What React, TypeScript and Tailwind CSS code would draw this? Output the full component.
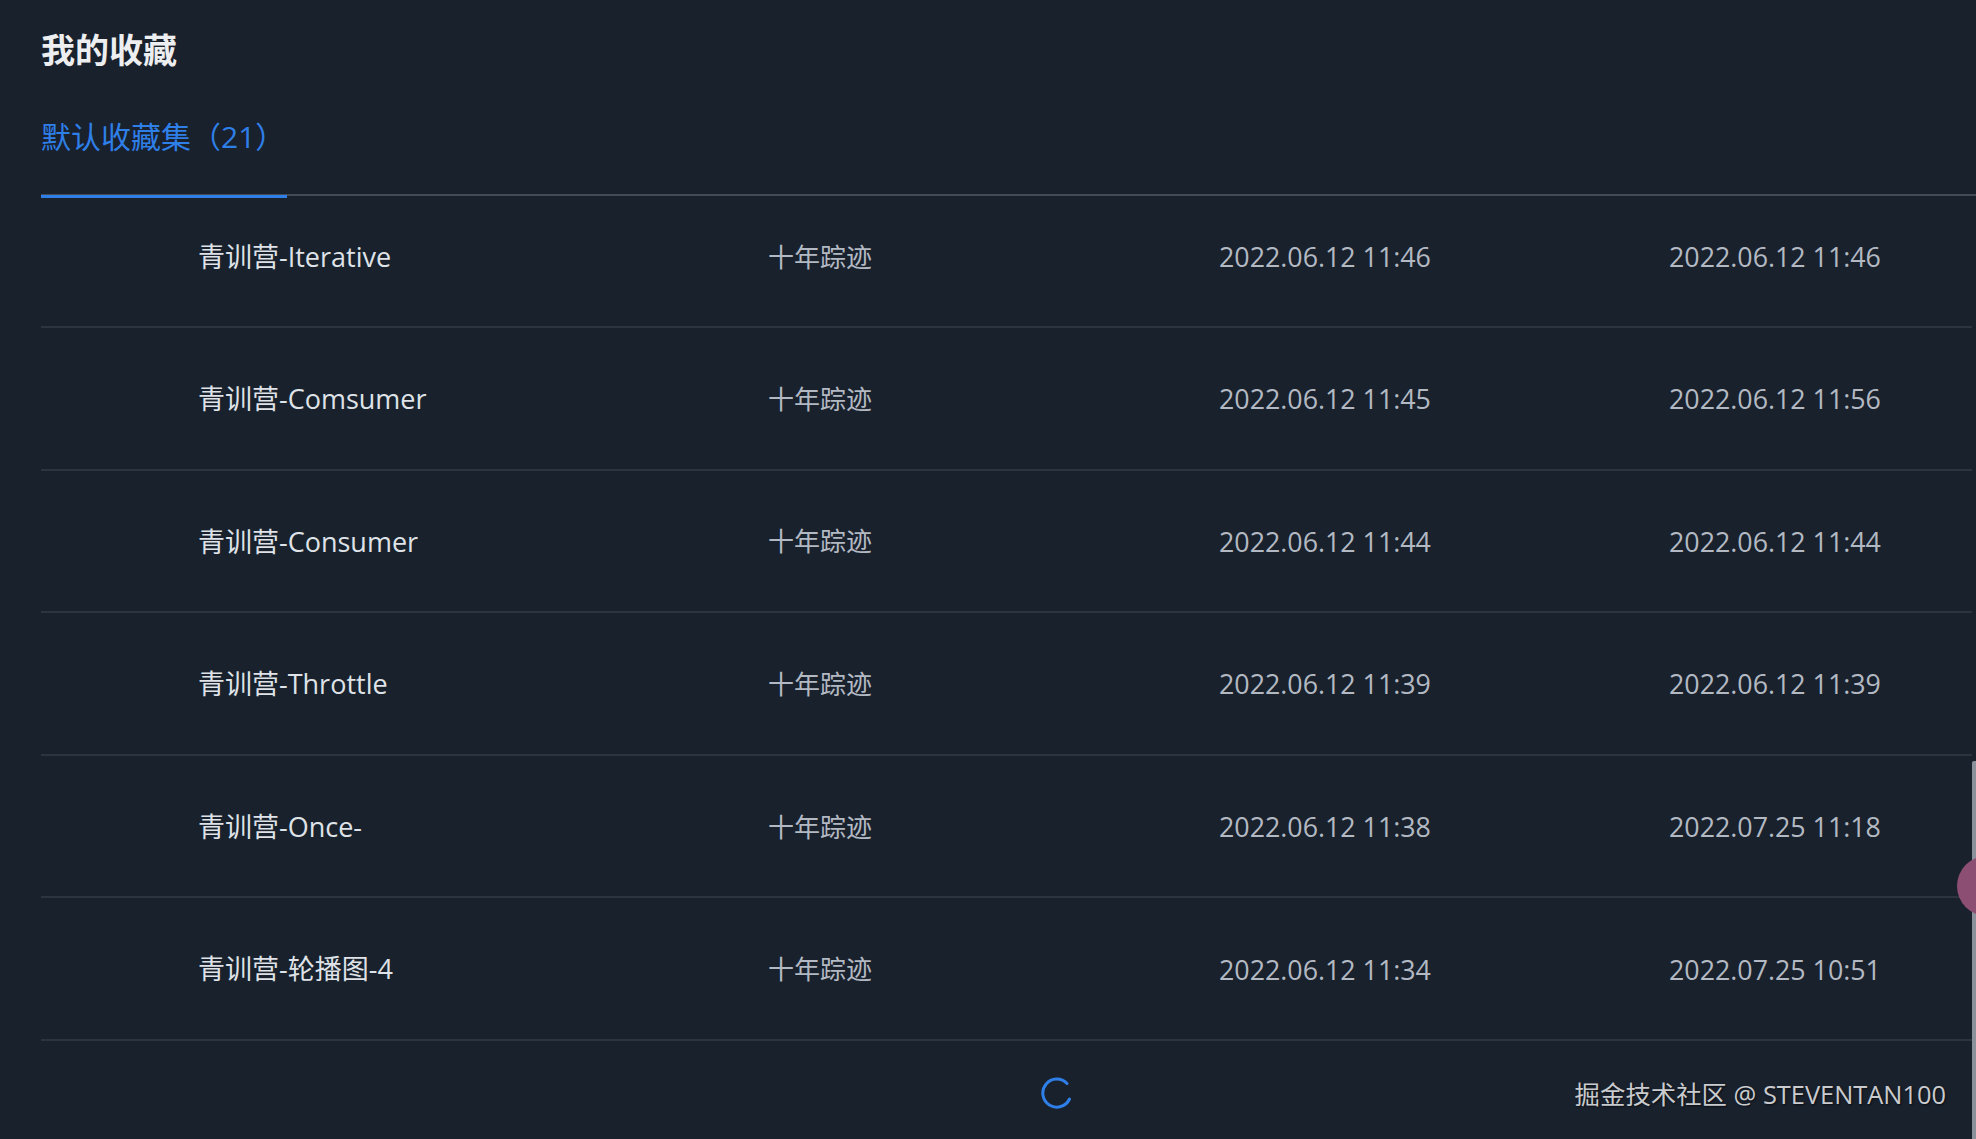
const ROWS = [
  { name: "青训营-Iterative", created: "2022.06.12 11:46", updated: "2022.06.12 11:46" },
  { name: "青训营-Comsumer", created: "2022.06.12 11:45", updated: "2022.06.12 11:56" },
  { name: "青训营-Consumer", created: "2022.06.12 11:44", updated: "2022.06.12 11:44" },
  { name: "青训营-Throttle", created: "2022.06.12 11:39", updated: "2022.06.12 11:39" },
  { name: "青训营-Once-", created: "2022.06.12 11:38", updated: "2022.07.25 11:18" },
  { name: "青训营-轮播图-4", created: "2022.06.12 11:34", updated: "2022.07.25 10:51" },
];

export default function App() {
  return (
    <div className="relative h-[1139px] overflow-hidden bg-[#19212d] font-['Open_Sans','Noto_Sans_CJK_SC',sans-serif]">
      <div className="pl-[41px]">
        <h1 className="pt-[26px] text-[34px] leading-[48px] font-bold text-[#eceef0]">我的收藏</h1>

        {/* Tabs */}
        <div className="mt-[41px] flex h-[81px] border-b-2 border-[#454b55]">
          <div className="-mb-[2px] h-[83px] w-[246px] border-b-[3px] border-[#2f7fe8] text-[30px] leading-[44px] text-[#2f7fe8]">
            默认收藏集（21）
          </div>
        </div>

        {/* List */}
        <div className="mr-[4px]">
          {ROWS.map((row, i) => (
            <div
              key={row.name}
              className={`grid grid-cols-[727px_451px_450px_1fr] items-center border-b-2 border-[#2c3440] ${
                i === 0 ? "h-[132px] pb-[7px]" : "h-[142.6px] pt-[2px]"
              }`}
            >
              <div className="pl-[157px] text-[27px] text-[#dfe3e8]">{row.name}</div>
              <div className="text-[26px] text-[#b3b9c2]">十年踪迹</div>
              <div className="text-[26.8px] text-[#b3b9c2]">{row.created}</div>
              <div className="text-[26.8px] text-[#b3b9c2]">{row.updated}</div>
            </div>
          ))}
        </div>
      </div>

      {/* Loading spinner */}
      <svg className="absolute left-[1041px] top-[1077px] h-[32px] w-[32px]" viewBox="0 0 32 32" fill="none">
        <path d="M26 6.5A14 14 0 1 0 28.5 22" stroke="#2f7fe8" strokeWidth="3" strokeLinecap="round" />
      </svg>

      {/* Scrollbar and floating button */}
      <div className="absolute left-[1972px] top-[761px] h-[378px] w-[4px] rounded-tl-[2px] bg-[#8b919a]" />
      <div className="absolute left-[1957px] top-[856px] h-[60px] w-[60px] rounded-full bg-[#8c4f73]" />

      {/* Watermark */}
      <div className="absolute right-[30px] top-[1075px] text-[25.4px] leading-[38px] text-[#c9cbce] [text-shadow:1px_1px_2px_rgba(0,0,0,0.6)]">
        掘金技术社区 @ STEVENTAN100
      </div>
    </div>
  );
}
